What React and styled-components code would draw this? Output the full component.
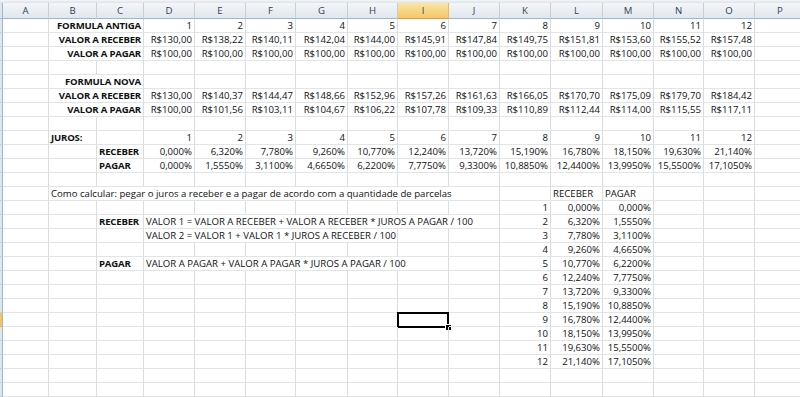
import React from "react";
import styled, { createGlobalStyle } from "styled-components";

const COLS = ["A", "B", "C", "D", "E", "F", "G", "H", "I", "J", "K", "L", "M", "N", "O", "P"];
const WIDTHS = [46, 48, 47, 51, 51, 50, 52, 50, 51, 51, 51, 52, 51, 50, 51, 51];
const ROW_COUNT = 28;
const ACTIVE_COL = 8; // I
const ACTIVE_ROW = 22;

const num = n => ({ t: String(n), a: "right" });
const series = values => values.map((v, i) => ({ c: 3 + i, t: v, a: "right" }));
const parcelas = Array.from({ length: 12 }, (_, i) => String(i + 1));

const receber = ["0,000%", "6,320%", "7,780%", "9,260%", "10,770%", "12,240%", "13,720%", "15,190%", "16,780%", "18,150%", "19,630%", "21,140%"];
const pagar = ["0,000%", "1,5550%", "3,1100%", "4,6650%", "6,2200%", "7,7750%", "9,3300%", "10,8850%", "12,4400%", "13,9950%", "15,5500%", "17,1050%"];

const label = (text, col = 1, span = 2, a = "right") => ({ c: col, span, t: text, a, b: true });

const sheet = {
  1: [label("FORMULA ANTIGA"), ...series(parcelas)],
  2: [
    label("VALOR A RECEBER"),
    ...series(["R$130,00", "R$138,22", "R$140,11", "R$142,04", "R$144,00", "R$145,91", "R$147,84", "R$149,75", "R$151,81", "R$153,60", "R$155,52", "R$157,48"]),
  ],
  3: [label("VALOR A PAGAR"), ...series(Array(12).fill("R$100,00"))],
  5: [label("FORMULA NOVA")],
  6: [
    label("VALOR A RECEBER"),
    ...series(["R$130,00", "R$140,37", "R$144,47", "R$148,66", "R$152,96", "R$157,26", "R$161,63", "R$166,05", "R$170,70", "R$175,09", "R$179,70", "R$184,42"]),
  ],
  7: [
    label("VALOR A PAGAR"),
    ...series(["R$100,00", "R$101,56", "R$103,11", "R$104,67", "R$106,22", "R$107,78", "R$109,33", "R$110,89", "R$112,44", "R$114,00", "R$115,55", "R$117,11"]),
  ],
  9: [label("JUROS:", 1, 1, "left"), ...series(parcelas)],
  10: [label("RECEBER", 2, 1, "left"), ...series(receber)],
  11: [label("PAGAR", 2, 1, "left"), ...series(pagar)],
  13: [
    { c: 1, span: 9, t: "Como calcular: pegar o juros a receber e a pagar de acordo com a quantidade de parcelas" },
    { c: 11, t: "RECEBER" },
    { c: 12, t: "PAGAR" },
  ],
  15: [
    label("RECEBER", 2, 1, "left"),
    { c: 3, span: 7, t: "VALOR 1 = VALOR A RECEBER + VALOR A RECEBER * JUROS A PAGAR / 100" },
  ],
  16: [{ c: 3, span: 5, t: "VALOR 2 = VALOR 1 + VALOR 1 * JUROS A RECEBER / 100" }],
  18: [
    label("PAGAR", 2, 1, "left"),
    { c: 3, span: 6, t: "VALOR A PAGAR + VALOR A PAGAR * JUROS A PAGAR / 100" },
  ],
};

// tabela lateral: parcela / receber / pagar nas colunas K, L, M
parcelas.forEach((p, i) => {
  const row = 14 + i;
  sheet[row] = [
    ...(sheet[row] || []),
    { c: 10, ...num(p) },
    { c: 11, t: receber[i], a: "right" },
    { c: 12, t: pagar[i], a: "right" },
  ];
});

const GlobalStyle = createGlobalStyle`
  html, body {
    margin: 0;
    padding: 0;
    background: #fff;
    overflow: hidden;
  }
  body {
    font-family: "Open Sans", "Liberation Sans", sans-serif;
    font-size: 9.6px;
    color: #111;
  }
`;

const Window = styled.div`
  width: 800px;
  height: 397px;
  overflow: hidden;
`;

const TopBand = styled.div`
  height: 3px;
  background: linear-gradient(#f4f6f9, #dde2e8);
`;

const Grid = styled.div`
  display: grid;
  width: 808px;
  grid-template-columns: 3px ${WIDTHS.map(w => `${w}px`).join(" ")};
  grid-template-rows: 16px;
  grid-auto-rows: 14px;
`;

const Corner = styled.div`
  box-sizing: border-box;
  background: #dfe5ed;
  border-right: 1px solid #9eb6ce;
  border-bottom: 1px solid #9eb6ce;
`;

const ColHeader = styled.div`
  box-sizing: border-box;
  display: flex;
  align-items: center;
  justify-content: center;
  color: #333f4d;
  font-size: 9.6px;
  background: ${p =>
    p.$active
      ? "linear-gradient(#f9e5a8, #f3c865)"
      : "linear-gradient(#f3f6f9, #e1e7ee)"};
  border-right: 1px solid ${p => (p.$active ? "#f0b84f" : "#c5cfda")};
  border-bottom: 1px solid ${p => (p.$active ? "#f29436" : "#9eb6ce")};
`;

const RowStub = styled.div`
  box-sizing: border-box;
  background: ${p => (p.$active ? "#f5c55e" : "#e0e6ee")};
  border-right: 1px solid #9eb6ce;
  border-bottom: 1px solid ${p => (p.$active ? "#f0b84f" : "#c5cfda")};
`;

const Cell = styled.div`
  grid-column: span ${p => p.$span || 1};
  position: relative;
  box-sizing: border-box;
  padding: 0 2px;
  line-height: 13px;
  white-space: nowrap;
  text-align: ${p => p.$align || "left"};
  font-weight: ${p => (p.$bold ? 700 : 400)};
  letter-spacing: ${p => (p.$bold ? "-0.2px" : "0")};
  direction: ${p => (p.$align === "right" ? "rtl" : "ltr")};
  border-right: 1px solid #dadcdd;
  border-bottom: 1px solid #e3e4e5;
`;

const CellText = styled.span`
  direction: ltr;
  unicode-bidi: isolate;
`;

const Selection = styled.div`
  position: absolute;
  left: -1px;
  top: -1px;
  right: -1px;
  bottom: -2px;
  border: 2px solid #000;
  pointer-events: none;
`;

const FillHandle = styled.span`
  position: absolute;
  right: -4px;
  bottom: -4px;
  width: 5px;
  height: 5px;
  background: #000;
  box-shadow: 0 0 0 1px #fff;
`;

const renderRow = r => {
  const specs = sheet[r] || [];
  const out = [<RowStub key={`s${r}`} $active={r === ACTIVE_ROW} />];
  let c = 0;
  while (c < COLS.length) {
    const spec = specs.find(s => s.c === c);
    const selected = r === ACTIVE_ROW && c === ACTIVE_COL;
    if (spec) {
      out.push(
        <Cell key={`${r}-${c}`} $span={spec.span} $align={spec.a} $bold={spec.b}>
          <CellText>{spec.t}</CellText>
        </Cell>
      );
      c += spec.span || 1;
    } else {
      out.push(
        <Cell key={`${r}-${c}`}>
          {selected && (
            <Selection>
              <FillHandle />
            </Selection>
          )}
        </Cell>
      );
      c += 1;
    }
  }
  return out;
};

export default function App() {
  const rows = Array.from({ length: ROW_COUNT }, (_, i) => i + 1);
  return (
    <Window>
      <GlobalStyle />
      <TopBand />
      <Grid>
        <Corner />
        {COLS.map((l, i) => (
          <ColHeader key={l} $active={i === ACTIVE_COL}>
            {l}
          </ColHeader>
        ))}
        {rows.map(renderRow)}
      </Grid>
    </Window>
  );
}
